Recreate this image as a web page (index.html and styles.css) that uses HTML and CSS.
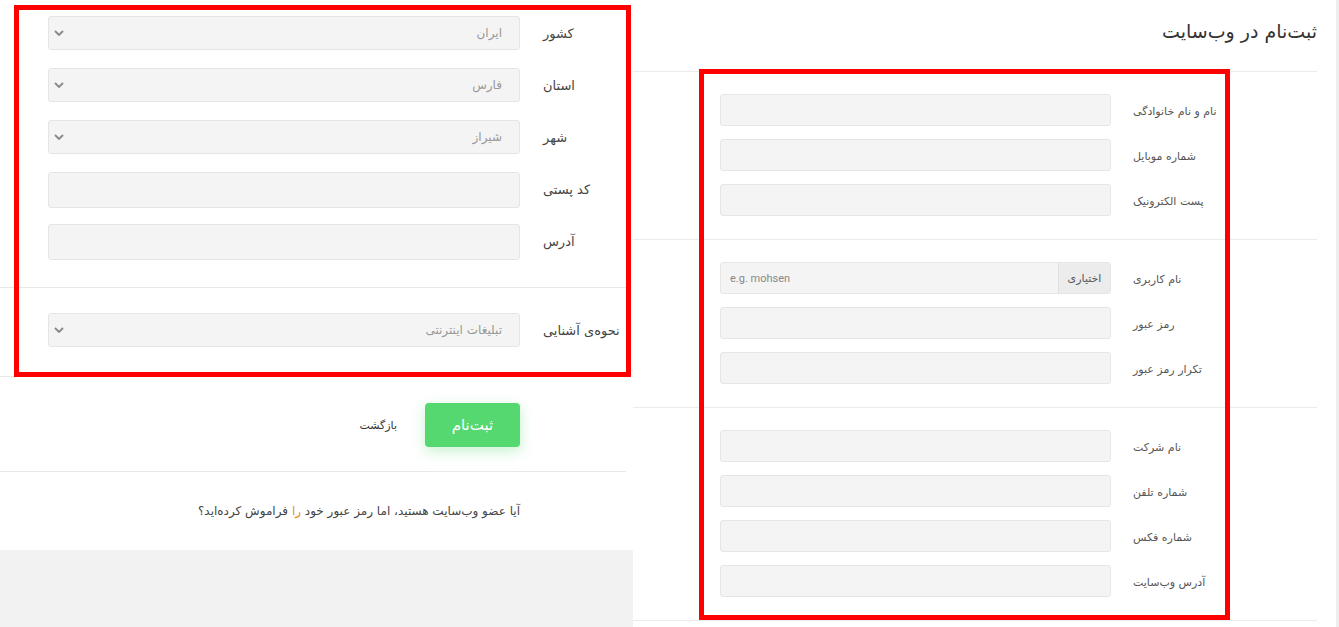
FILE: index.html
```html
<!DOCTYPE html>
<html lang="fa">
<head>
<meta charset="utf-8">
<title>ثبت‌نام در وب‌سایت</title>
<link rel="stylesheet" href="styles.css">
</head>
<body>
<div class="page">
  <div class="left-panel">
    <div class="l-section l-first">
      <div class="l-row">
        <div class="l-label">کشور</div>
        <div class="l-select"><span class="sel-text">ایران</span><svg class="chev" width="10" height="6" viewBox="0 0 10 6"><path d="M1 1l4 4 4-4" fill="none" stroke="#888" stroke-width="1.8"/></svg></div>
      </div>
      <div class="l-row">
        <div class="l-label">استان</div>
        <div class="l-select"><span class="sel-text">فارس</span><svg class="chev" width="10" height="6" viewBox="0 0 10 6"><path d="M1 1l4 4 4-4" fill="none" stroke="#888" stroke-width="1.8"/></svg></div>
      </div>
      <div class="l-row">
        <div class="l-label">شهر</div>
        <div class="l-select"><span class="sel-text">شیراز</span><svg class="chev" width="10" height="6" viewBox="0 0 10 6"><path d="M1 1l4 4 4-4" fill="none" stroke="#888" stroke-width="1.8"/></svg></div>
      </div>
      <div class="l-row input-row">
        <div class="l-label">کد پستی</div>
        <div class="l-input"></div>
      </div>
      <div class="l-row input-row">
        <div class="l-label">آدرس</div>
        <div class="l-input"></div>
      </div>
    </div>
    <div class="l-section l-second">
      <div class="l-row">
        <div class="l-label">نحوه‌ی آشنایی</div>
        <div class="l-select"><span class="sel-text">تبلیغات اینترنتی</span><svg class="chev" width="10" height="6" viewBox="0 0 10 6"><path d="M1 1l4 4 4-4" fill="none" stroke="#888" stroke-width="1.8"/></svg></div>
      </div>
    </div>
    <div class="l-actions">
      <button class="btn-submit">ثبت‌نام</button>
      <a class="back-link">بازگشت</a>
    </div>
    <div class="l-forgot">
      <p>آیا عضو وب‌سایت هستید، اما رمز عبور خود <span class="hl">را</span> فراموش کرده‌اید؟</p>
    </div>
    <div class="l-footer"></div>
  </div>

  <div class="right-panel">
    <div class="r-inner">
      <h1 class="r-title">ثبت‌نام در وب‌سایت</h1>
      <div class="r-section">
        <div class="r-row"><div class="r-label">نام و نام خانوادگی</div><div class="r-input"></div></div>
        <div class="r-row"><div class="r-label">شماره موبایل</div><div class="r-input"></div></div>
        <div class="r-row"><div class="r-label">پست الکترونیک</div><div class="r-input"></div></div>
      </div>
      <div class="r-section">
        <div class="r-row"><div class="r-label">نام کاربری</div>
          <div class="r-group"><span class="r-addon">اختیاری</span><span class="r-ph">e.g. mohsen</span></div>
        </div>
        <div class="r-row"><div class="r-label">رمز عبور</div><div class="r-input"></div></div>
        <div class="r-row"><div class="r-label">تکرار رمز عبور</div><div class="r-input"></div></div>
      </div>
      <div class="r-section">
        <div class="r-row"><div class="r-label">نام شرکت</div><div class="r-input"></div></div>
        <div class="r-row"><div class="r-label">شماره تلفن</div><div class="r-input"></div></div>
        <div class="r-row"><div class="r-label">شماره فکس</div><div class="r-input"></div></div>
        <div class="r-row"><div class="r-label">آدرس وب‌سایت</div><div class="r-input"></div></div>
      </div>
    </div>
  </div>

  <div class="mark mark-left"></div>
  <div class="mark mark-right"></div>
</div>
</body>
</html>
```

FILE: styles.css
```css
* { box-sizing: border-box; }
html, body { margin: 0; padding: 0; background: #fff; }
body {
  font-family: "DejaVu Sans", "Noto Sans", sans-serif;
  color: #444;
}
.page {
  position: relative;
  width: 1339px;
  height: 627px;
  overflow: hidden;
  display: flex;
  direction: ltr;
}

/* ---------- left panel ---------- */
.left-panel {
  width: 633px;
  flex: none;
  display: flex;
  flex-direction: column;
}
.l-section {
  direction: rtl;
  border-bottom: 1px solid #e8e8e8;
  margin-right: 7px;
}
.l-first { padding: 16px 0 27px; }
.l-second { padding: 25px 0 29px; }
.l-row {
  display: flex;
  align-items: flex-start;
  padding-left: 48px;
  margin-bottom: 18px;
}
.l-row.input-row { margin-bottom: 16px; }
.l-row:last-child { margin-bottom: 0; }
.l-label {
  width: 83px;
  text-align: left;
  font-size: 13px;
  color: #444;
  padding-top: 10px;
  white-space: nowrap;
}
.l-select, .l-input {
  flex: 1;
  margin-right: 23px;
  background: #f4f4f4;
  border: 1px solid #e5e5e5;
  border-radius: 3px;
}
.l-select {
  height: 34px;
  display: flex;
  align-items: center;
  justify-content: space-between;
  padding: 0 17px 0 5px;
}
.l-input { height: 36px; }
.sel-text { font-size: 12px; color: #999; }
.chev { display: block; }

.l-actions {
  direction: rtl;
  display: flex;
  align-items: center;
  padding: 26px 106px 24px 0;
  border-bottom: 1px solid #e8e8e8;
  margin-right: 7px;
}
.btn-submit {
  width: 95px;
  height: 44px;
  border: none;
  border-radius: 4px;
  background: #55d870;
  color: #fff;
  font-family: inherit;
  font-size: 15px;
  box-shadow: 0 4px 14px rgba(85, 216, 112, 0.35);
}
.back-link {
  margin-right: 28px;
  font-size: 11px;
  color: #333;
}
.l-forgot {
  direction: rtl;
  height: 78px;
  display: flex;
  align-items: center;
  padding-right: 113px;
}
.l-forgot p {
  margin: 0;
  font-size: 12px;
  color: #444;
}
.hl { color: #e0891f; }
.l-footer {
  flex: 1;
  background: #f2f2f2;
}

/* ---------- right panel ---------- */
.right-panel {
  flex: 1;
  border-right: 3px solid #eeeeee;
  padding-right: 19px;
}
.r-inner { direction: rtl; }
.r-title {
  margin: 0;
  height: 72px;
  padding-top: 20px;
  font-size: 19px;
  font-weight: normal;
  color: #333;
  border-bottom: 1px solid #ebebeb;
}
.r-section {
  padding: 22px 0 23px;
  border-bottom: 1px solid #ebebeb;
}
.r-row {
  display: flex;
  align-items: center;
  padding-left: 87px;
  margin-bottom: 13px;
}
.r-row:last-child { margin-bottom: 0; }
.r-label {
  width: 184px;
  text-align: left;
  font-size: 11px;
  color: #555;
  white-space: nowrap;
  padding-top: 2px;
}
.r-input, .r-group {
  flex: 1;
  height: 32px;
  margin-right: 22px;
  background: #f4f4f4;
  border: 1px solid #e6e6e6;
  border-radius: 3px;
}
.r-group {
  display: flex;
  align-items: stretch;
  overflow: hidden;
}
.r-addon {
  width: 52px;
  display: flex;
  align-items: center;
  justify-content: center;
  background: #ececec;
  border-left: 1px solid #e0e0e0;
  font-size: 11px;
  color: #555;
}
.r-ph {
  flex: 1;
  direction: ltr;
  text-align: left;
  padding-left: 9px;
  display: flex;
  align-items: center;
  font-family: "Roboto", "Liberation Sans", sans-serif;
  font-size: 11px;
  color: #888;
}

/* ---------- annotation boxes ---------- */
.mark {
  position: absolute;
  border: 5px solid #ff0000;
  pointer-events: none;
}
.mark-left { left: 14px; top: 5px; width: 617px; height: 372px; }
.mark-right { left: 699px; top: 69px; width: 531px; height: 551px; }
```
